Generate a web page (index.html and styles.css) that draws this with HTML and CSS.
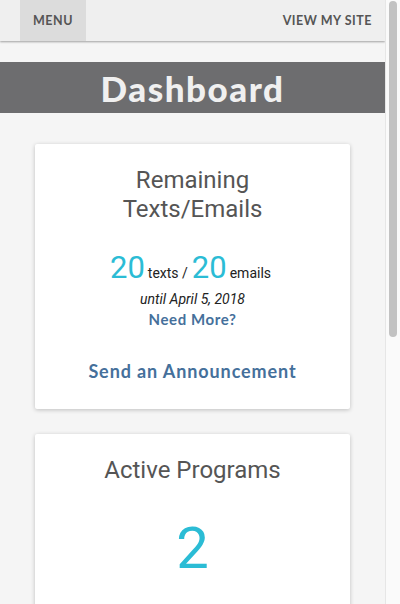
FILE: index.html
```html
<!DOCTYPE html>
<html>
<head>
<meta charset="utf-8">
<link rel="stylesheet" href="styles.css">
</head>
<body>
<div class="viewport">
  <div class="page">
    <header class="topbar">
      <a class="nav-btn menu">MENU</a>
      <a class="nav-btn site">VIEW MY SITE</a>
    </header>
    <div class="title-bar"><h1>Dashboard</h1></div>
    <main class="cards">
      <section class="card">
        <h2 class="card-title">Remaining<br>Texts/Emails</h2>
        <div class="counts">
          <span class="num">20</span><span class="unit">texts /</span><span class="num">20</span><span class="unit">emails</span>
        </div>
        <div class="until">until April 5, 2018</div>
        <a class="link need">Need More?</a>
        <a class="link send">Send an Announcement</a>
      </section>
      <section class="card">
        <h2 class="card-title">Active Programs</h2>
        <div class="big">2</div>
      </section>
    </main>
  </div>
  <div class="scrollbar"><div class="thumb"></div></div>
</div>
</body>
</html>
```

FILE: styles.css
```css
html, body {
  margin: 0;
  padding: 0;
}
body {
  background: #f5f5f5;
  font-family: Roboto, "Liberation Sans", sans-serif;
}
.viewport {
  display: flex;
  height: 604px;
  overflow: hidden;
}
.page {
  flex: 1;
  min-width: 0;
  background: #f5f5f5;
}
.scrollbar {
  box-sizing: border-box;
  flex: 0 0 15px;
  width: 15px;
  border-left: 1px solid #e6e6e6;
  background: #fafafa;
  padding: 1px 3px 0 3px;
}
.thumb {
  height: 336px;
  background: #c2c2c2;
  border-radius: 4px;
}
.topbar {
  height: 41px;
  background: #efefef;
  box-shadow: 0 1px 2px rgba(0,0,0,0.35);
  display: flex;
  justify-content: space-between;
  align-items: stretch;
  padding: 0 13px 0 20px;
}
.nav-btn {
  font-family: "Lato", sans-serif;
  font-weight: 700;
  font-size: 12.5px;
  letter-spacing: 0.5px;
  color: #555;
  display: flex;
  align-items: center;
}
.menu {
  background: #dcdcdc;
  padding: 0 13px;
}
.title-bar {
  margin-top: 21px;
  height: 51px;
  background: #6d6d6f;
  display: flex;
  align-items: center;
  justify-content: center;
}
.title-bar h1 {
  margin: 0;
  font-family: "Lato", sans-serif;
  font-weight: 900;
  font-size: 35px;
  letter-spacing: 1.5px;
  color: #f0f0f0;
}
.cards {
  padding: 31px 35px 0 35px;
  display: flex;
  flex-direction: column;
  gap: 25px;
}
.card {
  background: #fff;
  box-shadow: 0 1px 4px rgba(0,0,0,0.22);
  border-radius: 2px;
  text-align: center;
  padding: 22px 10px 26px;
}
.card-title {
  margin: 0;
  font-weight: 400;
  font-size: 24px;
  line-height: 29px;
  color: #555;
}
.counts {
  margin-top: 27px;
  display: flex;
  justify-content: center;
  align-items: baseline;
  line-height: 34px;
}
.num {
  font-size: 31px;
  color: #2bbcd5;
}
.unit {
  font-size: 14px;
  color: #222;
  margin: 0 4px 0 3px;
}
.until {
  font-style: italic;
  font-size: 14px;
  color: #222;
  line-height: 18px;
}
.link {
  display: block;
  font-family: "Lato", sans-serif;
  font-weight: 700;
  color: #45709b;
}
.need {
  font-size: 15px;
  line-height: 22px;
  letter-spacing: 0.6px;
}
.send {
  margin-top: 29px;
  font-size: 18px;
  line-height: 24px;
  letter-spacing: 0.9px;
}
.big {
  margin-top: 28px;
  font-size: 58px;
  line-height: 70px;
  color: #2bbcd5;
}
```
